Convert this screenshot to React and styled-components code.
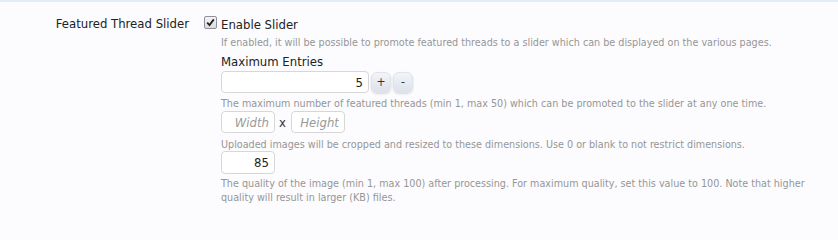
import React from "react";
import styled, { createGlobalStyle } from "styled-components";

const Global = createGlobalStyle`
  html, body { margin: 0; padding: 0; background: #fcfcfe; }
  body { font-family: "DejaVu Sans Condensed", "DejaVu Sans", sans-serif; }
`;

const Row = styled.div`
  display: grid;
  grid-template-columns: 189px 1fr;
  column-gap: 15px;
  border-top: 2px solid #e6ecf3;
  padding: 11px 0 30px;
  min-height: 195px;
`;

const Label = styled.div`
  text-align: right;
  font-size: 13px;
  color: #222;
  padding-top: 3px;
`;

const Content = styled.div`
  display: flex;
  flex-direction: column;
`;

const CheckLine = styled.label`
  display: flex;
  align-items: center;
  gap: 4px;
  font-size: 13px;
  color: #222;
  height: 18px;
  margin-top: 2px;
`;

const CheckBox = styled.span`
  width: 11px;
  height: 11px;
  border: 1px solid #8f8f9d;
  border-radius: 2px;
  background: linear-gradient(#f4f4f4, #dcdcdc);
  display: flex;
  align-items: center;
  justify-content: center;
  margin-top: -3px;
`;

const Indent = styled.div`
  padding-left: 17px;
  display: flex;
  flex-direction: column;
`;

const Hint = styled.p`
  margin: 0;
  font-size: 10.7px;
  line-height: ${(p) => p.$lh || 13}px;
  color: #969696;
  max-width: 600px;
  margin-top: ${(p) => p.$mt || 0}px;
`;

const SubLabel = styled.div`
  font-size: 13px;
  color: #222;
  margin-top: 4px;
  line-height: 17px;
`;

const Controls = styled.div`
  display: flex;
  align-items: center;
  gap: 2px;
  margin-top: ${(p) => p.$mt || 0}px;
`;

const TextBox = styled.input`
  box-sizing: border-box;
  width: ${(p) => p.$w}px;
  height: ${(p) => p.$h || 22}px;
  border: 1px solid #d7d7d7;
  border-radius: 4px;
  background: #fff;
  font-family: inherit;
  font-size: 13px;
  color: #222;
  text-align: right;
  padding: 0 5px;
  outline: none;
  &::placeholder {
    color: #9a9a9a;
    font-style: italic;
  }
`;

const SpinButton = styled.button`
  box-sizing: border-box;
  width: 20px;
  height: 21px;
  border: 1px solid #dfe3ea;
  border-radius: 6px;
  background: linear-gradient(#f2f4f9, #dde1ea);
  box-shadow: 0 1px 2px rgba(0, 0, 0, 0.15);
  font-family: inherit;
  font-size: 12px;
  color: #333;
  padding: 0;
  display: flex;
  align-items: center;
  justify-content: center;
`;

const Times = styled.span`
  font-size: 13px;
  color: #333;
  padding: 0 3px 0 2px;
`;

export default function App() {
  return (
    <>
      <Global />
      <Row>
        <Label>Featured Thread Slider</Label>
        <Content>
          <CheckLine>
            <CheckBox>
              <svg width="9" height="9" viewBox="0 0 9 9">
                <path d="M1.2 4.6 L3.5 7 L7.8 1.4" fill="none" stroke="#222" strokeWidth="1.8" />
              </svg>
            </CheckBox>
            Enable Slider
          </CheckLine>
          <Indent>
            <Hint $mt={2.5}>
              If enabled, it will be possible to promote featured threads to a slider which can be displayed on the various pages.
            </Hint>
            <SubLabel>Maximum Entries</SubLabel>
            <Controls $mt={1.5}>
              <TextBox $w={148} defaultValue="5" />
              <SpinButton>+</SpinButton>
              <SpinButton>-</SpinButton>
            </Controls>
            <Hint $mt={3.5}>
              The maximum number of featured threads (min 1, max 50) which can be promoted to the slider at any one time.
            </Hint>
            <Controls $mt={1.5}>
              <TextBox $w={54} placeholder="Width" />
              <Times>x</Times>
              <TextBox $w={54} placeholder="Height" />
            </Controls>
            <Hint $mt={4.5}>
              Uploaded images will be cropped and resized to these dimensions. Use 0 or blank to not restrict dimensions.
            </Hint>
            <Controls $mt={0.5}>
              <TextBox $w={54} $h={23} defaultValue="85" />
            </Controls>
            <Hint $mt={3} $lh={14}>
              The quality of the image (min 1, max 100) after processing. For maximum quality, set this value to 100. Note that higher quality will result in larger (KB) files.
            </Hint>
          </Indent>
        </Content>
      </Row>
    </>
  );
}
